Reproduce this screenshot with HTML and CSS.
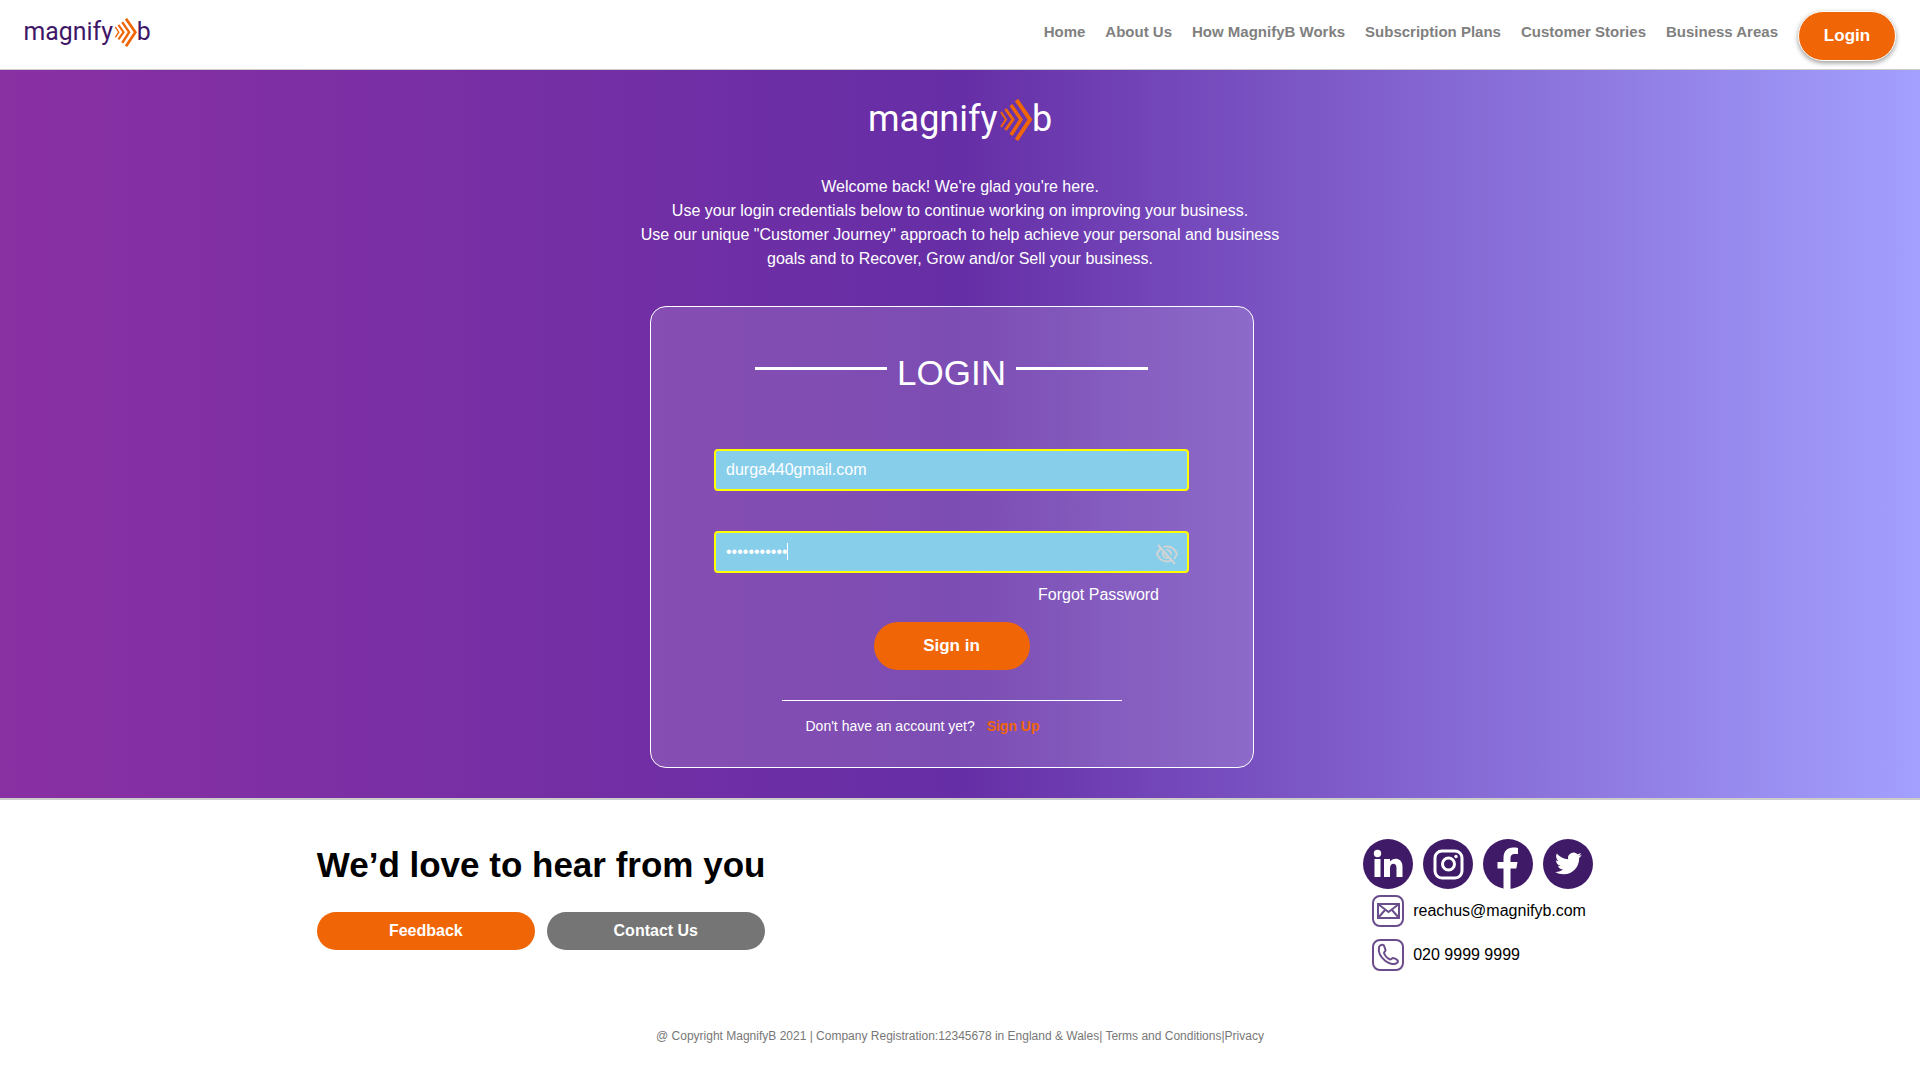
FILE: index.html
```html
<!DOCTYPE html>
<html lang="en">
<head>
<meta charset="utf-8">
<meta name="viewport" content="width=device-width, initial-scale=1">
<title>MagnifyB - Login</title>
<link rel="stylesheet" href="styles.css">
</head>
<body>
<header class="topbar">
  <a class="brand" href="#" aria-label="magnifyb">
    <svg class="logo logo-small" viewBox="0 0 180 42">
      <text x="-2" y="32">magnify</text><text x="162" y="32">b</text>
      <g class="chevrons"><path stroke-width="2" d="M1 13l5 7.500-5 7.500"/><path stroke-width="3" d="M5.500 10l7.500 10.500-7.500 10.500"/><path stroke-width="3.500" d="M11 6l10 14.500L11 36"/><path stroke-width="4" d="M16.500 1L30 20.500 16.500 41"/></g>
    </svg>
  </a>
  <nav class="menu">
    <a href="#">Home</a>
    <a href="#">About Us</a>
    <a href="#">How MagnifyB Works</a>
    <a href="#">Subscription Plans</a>
    <a href="#">Customer Stories</a>
    <a href="#">Business Areas</a>
  </nav>
  <button class="login-button" type="button">Login</button>
</header>

<main class="hero">
  <svg class="logo logo-large" viewBox="0 0 180 42" role="img" aria-label="magnifyb">
    <text x="-2" y="32">magnify</text><text x="162" y="32">b</text>
    <g class="chevrons"><path stroke-width="2" d="M1 13l5 7.500-5 7.500"/><path stroke-width="3" d="M5.500 10l7.500 10.500-7.500 10.500"/><path stroke-width="3.500" d="M11 6l10 14.500L11 36"/><path stroke-width="4" d="M16.500 1L30 20.500 16.500 41"/></g>
  </svg>
  <p class="intro">Welcome back! We're glad you're here.<br>
    Use your login credentials below to continue working on improving your business.<br>
    Use our unique "Customer Journey" approach to help achieve your personal and business<br>
    goals and to Recover, Grow and/or Sell your business.</p>
  <form class="card">
    <h1 class="card-title">LOGIN</h1>
    <input class="field" type="text" aria-label="Email" value="durga440gmail.com">
    <div class="password">
      <input class="field" type="password" aria-label="Password" value="abcdefghijk">
      <span class="caret"></span>
      <button class="reveal" type="button" aria-label="Show password">
        <svg viewBox="0 0 24 24"><path d="M2 12c4-10 16-10 20 0-4 10-16 10-20 0z"/><circle cx="12" cy="12" r="4"/><circle cx="12" cy="12" r="1"/><path class="slash-gap" d="M5 2l16 19"/><path d="M3 3l17 19"/></svg>
      </button>
    </div>
    <a class="forgot" href="#">Forgot Password</a>
    <button class="sign-in" type="submit">Sign in</button>
    <p class="register">Don't have an account yet? <a href="#">Sign Up</a></p>
  </form>
</main>

<footer class="footer">
  <div class="footer-main">
    <section>
      <h2 class="footer-title">We’d love to hear from you</h2>
      <div class="footer-actions">
        <button class="pill" type="button">Feedback</button>
        <button class="pill pill-gray" type="button">Contact Us</button>
      </div>
    </section>
    <section class="contact">
      <div class="socials">
        <a href="#" aria-label="LinkedIn"><svg viewBox="0 0 50 50"><circle cx="25" cy="25" r="25"/><g class="mark"><circle cx="14.500" cy="14.500" r="3.700"/><path d="M11.500 20h6v18h-6zM21 20h6v2.600c3-4.600 12.500-4.200 12.500 5V38h-6v-9c0-6-6.500-5-6.500 0v9h-6z"/></g></svg></a>
        <a href="#" aria-label="Instagram"><svg viewBox="0 0 50 50"><circle cx="25" cy="25" r="25"/><g class="line"><rect x="12" y="12" width="27" height="27" rx="7"/><circle cx="25.500" cy="25" r="6"/></g><circle class="mark" cx="33" cy="17.500" r="1.700"/></svg></a>
        <a href="#" aria-label="Facebook"><svg viewBox="0 0 50 50"><circle cx="25" cy="25" r="25"/><path class="mark" d="M20.500 50V29.500H14.500V23h6v-4c0-7 4-10.500 9.500-10.500 2 0 3.800.2 5 .4V15h-3.500c-3 0-4 1.700-4 4v4h7l-1.200 6.500h-5.800V50z"/></svg></a>
        <a href="#" aria-label="Twitter"><svg viewBox="0 0 50 50"><circle cx="25" cy="25" r="25"/><path class="mark" transform="translate(12 11) scale(1.120)" d="M23.950 4.570a10 10 0 0 1-2.820.770 4.960 4.960 0 0 0 2.160-2.720c-.95.550-2 .950-3.130 1.180a4.920 4.920 0 0 0-8.380 4.480C7.690 8.090 4.070 6.130 1.640 3.160a4.930 4.930 0 0 0 1.520 6.570 4.900 4.900 0 0 1-2.230-.610v.060a4.920 4.920 0 0 0 3.950 4.830 5 5 0 0 1-2.210.080 4.940 4.940 0 0 0 4.600 3.420A9.870 9.870 0 0 1 0 19.540a14 14 0 0 0 7.550 2.210c9.050 0 14-7.500 14-13.980l-.020-.630a10 10 0 0 0 2.420-2.570z"/></svg></a>
      </div>
      <div class="contact-row">
        <svg viewBox="0 0 32 32"><rect x="1" y="1" width="30" height="30" rx="7"/><path d="M6 9h21v14H6zM6 9l10.500 8L27 9M6 23l7-8M27 23l-7-8"/></svg>
        <a href="#">reachus@magnifyb.com</a>
      </div>
      <div class="contact-row">
        <svg viewBox="0 0 32 32"><rect x="1" y="1" width="30" height="30" rx="7"/><path d="M7 8c1.500-3 5-3 5.500 0l1 3c.3 1-1.500 2-1.500 3 1 3 3 5 6 6.500 1 .3 2-1.500 3-1.500 3 .5 6 2.500 4.500 4.500C20 29 5 19 7 8z"/></svg>
        <span>020 9999 9999</span>
      </div>
    </section>
  </div>
  <p class="copyright">@ Copyright MagnifyB 2021 | Company Registration:12345678 in England &amp; Wales| <a href="#">Terms and Conditions</a>|<a href="#">Privacy</a></p>
</footer>
</body>
</html>
```

FILE: styles.css
```css
* { box-sizing: border-box; }

body {
  margin: 0;
  font-family: "Liberation Sans", Arial, sans-serif;
  font-size: 16px;
  line-height: 24px;
  color: #000;
  background: #fff;
}

h1, h2, p { margin: 0; }
a { color: inherit; text-decoration: none; }
button { font-family: inherit; cursor: pointer; border: 0; }

/* Logo */
.logo { display: block; overflow: visible; }
.logo text { font-family: Roboto, sans-serif; font-size: 36px; fill: currentColor; }
.chevrons { fill: none; stroke: #f06506; transform: translateX(130px); }
.logo-small { width: 126px; height: 29px; color: #3f1767; }
.logo-large { width: 180px; height: 42px; }

/* Header */
.topbar {
  display: flex;
  align-items: flex-start;
  height: 70px;
  padding: 11px 24px 0;
  border-bottom: 1px solid #ccc;
}
.brand { margin-right: auto; padding-top: 7px; }
.menu {
  display: flex;
  gap: 20px;
  margin-right: 20px;
  padding-top: 9px;
  font-size: 15px;
  font-weight: bold;
  color: #808080;
}
.login-button {
  width: 98px;
  height: 50px;
  border: 1px solid #fff;
  border-radius: 25px;
  background: #f06506;
  color: #fff;
  font-size: 17px;
  font-weight: bold;
  box-shadow: 0 2px 5px rgba(0, 0, 0, 0.4);
}

/* Hero */
.hero {
  display: flex;
  flex-direction: column;
  align-items: center;
  padding: 29px 16px 30px;
  color: #fff;
  background: linear-gradient(to right, #8930a3, #662ea6 50%, #a3a0ff);
  border-bottom: 2px solid #ccc;
}
.intro { margin-top: 34px; text-align: center; }

.card {
  display: flex;
  flex-direction: column;
  align-items: center;
  width: 100%;
  max-width: 604px;
  margin: 35px 16px 0 0;
  padding: 44px 64px 29px 63px;
  border: 1px solid #fff;
  border-radius: 16px;
  background: rgba(255, 255, 255, 0.15);
}
.card-title {
  display: flex;
  justify-content: center;
  gap: 10px;
  font-size: 35px;
  font-weight: normal;
  line-height: 44px;
}
.card-title::before,
.card-title::after {
  content: "";
  width: 132px;
  height: 3px;
  margin-top: 16px;
  background: #fff;
}
.field {
  width: 100%;
  height: 42px;
  padding: 0 10px;
  border: 2px solid #ff0;
  border-radius: 4px;
  background: #87ceeb;
  color: #fff;
  font: inherit;
}
.card > .field { margin-top: 54px; }
.password { position: relative; display: flex; width: 100%; margin-top: 40px; }
.caret {
  position: absolute;
  left: 73px;
  top: 12px;
  width: 1px;
  height: 17px;
  background: #fff;
}
.reveal {
  position: absolute;
  right: 10px;
  top: 11px;
  width: 24px;
  height: 24px;
  padding: 0;
  background: none;
}
.reveal svg { display: block; fill: none; stroke: #d3d3d3; stroke-width: 2; }
.reveal .slash-gap { stroke: #87ceeb; }
.forgot { align-self: flex-end; margin: 10px 30px 0 0; }
.sign-in {
  width: 156px;
  height: 48px;
  margin-top: 15px;
  border-radius: 24px;
  background: #f06506;
  color: #fff;
  font-size: 17px;
  font-weight: bold;
}
.register {
  width: 340px;
  margin-top: 30px;
  padding: 13px 24px 0;
  border-top: 1px solid #fff;
  font-size: 14px;
}
.register a { margin-left: 8px; font-weight: bold; color: #f06506; }

/* Footer */
.footer-main {
  display: flex;
  flex-wrap: wrap;
  justify-content: space-between;
  gap: 32px;
  width: 67%;
  margin: 0 auto;
  padding-top: 39px;
}
.footer-title { padding-top: 6px; font-size: 35px; line-height: 40px; }
.footer-actions { display: flex; gap: 12px; margin-top: 27px; }
.pill {
  width: 218px;
  height: 38px;
  border-radius: 19px;
  background: #f06506;
  color: #fff;
  font-size: 16px;
  font-weight: bold;
}
.pill-gray { background: #757575; }

.contact { width: 240px; }
.socials { display: flex; gap: 10px; }
.socials svg { display: block; width: 50px; height: 50px; fill: #3f1a66; }
.socials .mark { fill: #fff; }
.socials .line { fill: none; stroke: #fff; stroke-width: 3; }
.contact-row {
  display: grid;
  grid-template-columns: 50px auto;
  align-items: start;
  margin: 6px 0 12px;
}
.contact-row svg {
  width: 32px;
  height: 32px;
  justify-self: center;
  fill: none;
  stroke: #6b4d8c;
  stroke-width: 2;
}
.contact-row a, .contact-row span { padding-top: 4px; }
.copyright {
  padding: 41px 16px 32px;
  text-align: center;
  font-size: 12px;
  color: #777;
}
```
